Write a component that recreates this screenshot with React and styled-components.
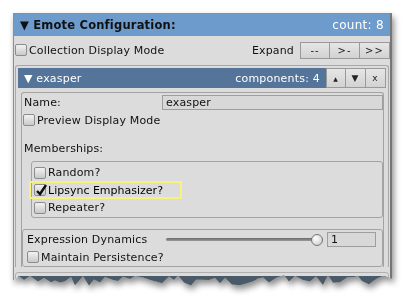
import styled, { createGlobalStyle } from "styled-components";

const Global = createGlobalStyle`
  html, body { margin: 0; padding: 0; background: #ffffff; }
  body { width: 405px; height: 307px; overflow: hidden; font-family: "DejaVu Sans", Verdana, sans-serif; }
`;

// jagged torn edge along the bottom of the panel (pseudo random, but fixed)
const torn = (() => {
  const pts = [];
  let seed = 7;
  const rnd = () => {
    seed = (seed * 9301 + 49297) % 233280;
    return seed / 233280;
  };
  for (let x = 0; x <= 379; x += 4 + Math.round(rnd() * 4)) {
    pts.push(`${x}px ${(262 + rnd() * 11).toFixed(1)}px`);
  }
  pts.push(`379px 266px`);
  return `polygon(0 0, 379px 0, ${pts.reverse().join(", ")})`;
})();

const Page = styled.div`
  padding: 13px 0 0 13px;
`;

const Frame = styled.div`
  width: 379px;
  filter: drop-shadow(2px 4px 3px rgba(0, 0, 0, 0.45));
`;

const Panel = styled.div`
  height: 276px;
  box-sizing: border-box;
  overflow: hidden;
  background: #dcdcdc;
  border: 1px solid #8e8e8e;
  border-right: 2px solid #767676;
  clip-path: ${torn};
`;

const Header = styled.div`
  height: ${(p) => p.$h || 20}px;
  background: ${(p) => p.$bg};
  display: flex;
  align-items: center;
  justify-content: space-between;
  padding: 0 6px 0 ${(p) => p.$pl || 6}px;
  color: #ffffff;
  font-size: ${(p) => (p.$bold ? 11.5 : 11)}px;
  font-weight: ${(p) => (p.$bold ? 700 : 400)};
  flex: 1;
`;

const Title = styled.span`
  color: ${(p) => p.$color || "#fff"};
  letter-spacing: 0.2px;
`;

const Count = styled.span`
  font-size: 12px;
  font-weight: 400;
  letter-spacing: 0.3px;
`;

const Row = styled.div`
  display: flex;
  align-items: center;
  flex: none;
  height: ${(p) => p.$h || 17}px;
  padding-left: ${(p) => p.$pl || 0}px;
  font-size: 11px;
  color: #111;
  letter-spacing: 0.15px;
`;

const Box = styled.span`
  width: 12px;
  height: 12px;
  box-sizing: border-box;
  border: 1px solid #8c8c8c;
  border-radius: 2px;
  background: linear-gradient(#f2f2f2, #c9c9c9);
  margin-right: 2px;
  position: relative;
  flex: none;
`;

const Tick = styled.svg`
  position: absolute;
  left: 0;
  top: -2px;
`;

const Spacer = styled.div`
  flex: 1;
`;

const BtnGroup = styled.div`
  display: flex;
  height: ${(p) => p.$h || 17}px;
`;

const Btn = styled.div`
  width: ${(p) => p.$w || 30}px;
  box-sizing: border-box;
  border: 1px solid #9a9a9a;
  border-left: ${(p) => (p.$first ? "1px solid #9a9a9a" : "none")};
  background: linear-gradient(#e6e6e6, #d2d2d2);
  display: flex;
  align-items: center;
  justify-content: center;
  font-size: ${(p) => p.$fs || 10}px;
  color: #222;
  letter-spacing: 1px;
`;

const Component = styled.div`
  margin: 1px 1px 0 1px;
  border: 1px solid #a8a8a8;
  border-bottom: none;
  border-radius: 3px 3px 0 0;
  padding: 2px 2px 0 2px;
`;

const CompHead = styled.div`
  display: flex;
`;

const Content = styled.div`
  margin: 4px 2px 0 3px;
  border: 1px solid #a3a3a3;
  border-bottom: none;
  border-radius: 3px 3px 0 0;
`;

const Field = styled.div`
  display: flex;
  align-items: center;
  height: 16px;
  padding-left: 2px;
  margin-top: 1px;
  font-size: 11px;
  color: #111;
  letter-spacing: 0.15px;
`;

const Label = styled.span`
  width: 138px;
`;

const Input = styled.div`
  height: 15px;
  box-sizing: border-box;
  border: 1px solid #9e9e9e;
  background: #d8d8d8;
  padding-left: 3px;
  display: flex;
  align-items: center;
  margin-right: ${(p) => p.$mr || 0}px;
  width: ${(p) => (p.$w ? `${p.$w}px` : "auto")};
  flex: ${(p) => (p.$w ? "none" : 1)};
`;

const Heading = styled.div`
  font-size: 11px;
  line-height: 13px;
  color: #111;
  letter-spacing: 0.15px;
  padding: 12px 0 0 2px;
`;

const Group = styled.div`
  margin: ${(p) => p.$mt || 0}px 0 0 ${(p) => p.$ml || 0}px;
  border: 1px solid #a3a3a3;
  border-radius: 3px;
  padding: ${(p) => p.$pad};
  display: flex;
  flex-direction: column;
`;

const Highlight = styled.div`
  margin-left: -5px;
  width: 153px;
  height: 18px;
  box-sizing: border-box;
  border: 2px solid #f6f27a;
  display: flex;
  align-items: center;
  padding-left: 3px;
  flex: none;
`;

const Slider = styled.div`
  width: 157px;
  height: 11px;
  position: relative;
  margin-right: 4px;
  display: flex;
  align-items: center;
`;

const Track = styled.div`
  flex: 1;
  height: 3px;
  border-radius: 2px;
  background: linear-gradient(#6a6a6a, #9a9a9a);
`;

const Knob = styled.div`
  position: absolute;
  right: 0;
  top: 0;
  width: 10px;
  height: 10px;
  border-radius: 50%;
  border: 1px solid #777;
  background: radial-gradient(circle at 40% 35%, #ffffff, #c4c4c4);
`;

const NextComp = styled.div`
  margin: 5px 1px 0 1px;
  border: 1px solid #b0b0b0;
  border-radius: 3px 3px 0 0;
  padding: 3px 2px 0 2px;
`;

const NextHead = styled.div`
  height: 20px;
  background: #4a5a69;
`;

const Check = ({ checked }) => (
  <Box>
    {checked && (
      <Tick width="13" height="14" viewBox="0 0 13 14">
        <path d="M2 8 L5 11 L11 2" fill="none" stroke="#111" strokeWidth="2.4" />
      </Tick>
    )}
  </Box>
);

export default function App() {
  return (
    <>
      <Global />
      <Page>
        <Frame>
          <Panel>
            <CompHead>
              <Header $bg="#6d9bcc" $bold $pl={6} $h={22}>
                <Title $color="#111">▼ Emote Configuration:</Title>
                <Count>count: 8</Count>
              </Header>
            </CompHead>
            <Row $h={28} $pl={1}>
              <Check />
              Collection Display Mode
              <Spacer />
              <span style={{ marginRight: 6 }}>Expand</span>
              <BtnGroup>
                <Btn $first>--</Btn>
                <Btn>&gt;-</Btn>
                <Btn>&gt;&gt;</Btn>
              </BtnGroup>
            </Row>
            <Component>
              <CompHead>
                <Header $bg="#54749a" $pl={6}>
                  <Title>▼ exasper</Title>
                  <Title>components: 4</Title>
                </Header>
                <BtnGroup $h={20}>
                  <Btn $first $w={20} $fs={6}>▲</Btn>
                  <Btn $w={20} $fs={9}>▼</Btn>
                  <Btn $w={20} $fs={9}>x</Btn>
                </BtnGroup>
              </CompHead>
              <Content>
                <Field>
                  <Label>Name:</Label>
                  <Input>exasper</Input>
                </Field>
                <Row $h={20} $pl={1}>
                  <Check />
                  Preview Display Mode
                </Row>
                <Heading>Memberships:</Heading>
                <Group $mt={6} $ml={9} $pad="2px 0 1px 2px">
                  <Row $h={17}>
                    <Check />
                    Random?
                  </Row>
                  <Highlight>
                    <Check checked />
                    <span style={{ fontSize: 11 }}>Lipsync Emphasizer?</span>
                  </Highlight>
                  <Row $h={17}>
                    <Check />
                    Repeater?
                  </Row>
                </Group>
                <Group $mt={11} $pad="0 0 0 4px">
                  <Row $h={18}>
                    <span style={{ width: 139 }}>Expression Dynamics</span>
                    <Slider>
                      <Track />
                      <Knob />
                    </Slider>
                    <Input $w={49} $mr={4}>1</Input>
                  </Row>
                  <Row $h={18}>
                    <Check />
                    Maintain Persistence?
                  </Row>
                </Group>
              </Content>
            </Component>
            <NextComp>
              <NextHead />
            </NextComp>
          </Panel>
        </Frame>
      </Page>
    </>
  );
}
